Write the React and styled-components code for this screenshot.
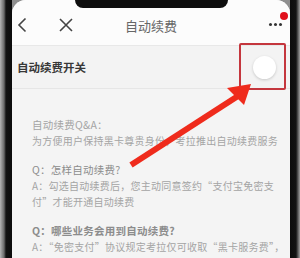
import React from 'react'
import styled, { createGlobalStyle } from 'styled-components'

const GlobalStyle = createGlobalStyle`
  body {
    margin: 0;
    background: #8f8f8f;
    font-family: "Noto Sans CJK SC", "Noto Sans", sans-serif;
  }
`

const Phone = styled.div`
  position: relative;
  display: flex;
  width: 300px;
  height: 258px;
  overflow: hidden;
  background: #8f8f8f;
`

const Bezel = styled.div`
  width: ${p => p.w}px;
  flex-shrink: 0;
  background: ${p => p.side === 'left'
    ? 'linear-gradient(to right, #b5b5b5 0, #6a6a6a 4px, #121212 6px, #0c0c0c 100%)'
    : 'linear-gradient(to right, #0c0c0c 0, #121212 6px, #5a5a5a 8px, #a0a0a0 100%)'};
`

const Screen = styled.div`
  flex: 1;
  display: flex;
  flex-direction: column;
  background: #f4f4f4;
  border-radius: 14px 14px 0 0;
  overflow: hidden;
`

const Notch = styled.div`
  position: absolute;
  left: 75px;
  top: 0;
  width: 153px;
  height: 8px;
  background: #0e0e0e;
  border-radius: 0 0 9px 9px;
`

const Header = styled.div`
  height: 46px;
  flex-shrink: 0;
  display: flex;
  align-items: center;
  padding-top: 4px;
  box-sizing: border-box;
  background: #fcfcfc;
  border-bottom: 1px solid #e8e8e8;
  position: relative;
`

const IconBtn = styled.div`
  width: ${p => p.w}px;
  margin-left: ${p => p.ml}px;
  display: flex;
  align-items: center;
`

const Title = styled.div`
  position: absolute;
  left: 0;
  right: 0;
  top: 16px;
  text-align: center;
  font-size: 13px;
  color: #666;
  pointer-events: none;
`

const More = styled.div`
  margin-left: auto;
  margin-right: 8px;
  position: relative;
  display: flex;
  gap: 2px;
`

const Dot = styled.span`
  width: 3px;
  height: 3px;
  border-radius: 50%;
  background: #333;
`

const Badge = styled.span`
  position: absolute;
  right: -6px;
  top: -11px;
  width: 8px;
  height: 8px;
  border-radius: 50%;
  background: #e0101b;
`

const SwitchRow = styled.div`
  height: 42px;
  flex-shrink: 0;
  display: flex;
  align-items: center;
  padding: 0 14px 0 5px;
  border-bottom: 1px solid #e6e6e6;
  background: #f3f3f3;
`

const Label = styled.div`
  font-size: 11.5px;
  font-weight: 700;
  color: #383838;
`

const Knob = styled.div`
  margin-left: auto;
  width: 23px;
  height: 23px;
  border-radius: 50%;
  background: #fff;
  box-shadow: 0 1px 3px rgba(0, 0, 0, 0.18);
`

const Content = styled.div`
  padding: 28px 6px 0 20px;
  display: flex;
  flex-direction: column;
  gap: 13px;
`

const Block = styled.div`
  font-size: 10px;
  line-height: 16px;
  color: #a4a4a4;
  white-space: nowrap;
  letter-spacing: 0.25px;
`

const Line = styled.div`
  color: ${p => p.dark ? '#8c8c8c' : 'inherit'};
  font-weight: ${p => p.bold ? 700 : 400};
  font-size: ${p => p.big ? '10.5px' : 'inherit'};
`

const Highlight = styled.div`
  position: absolute;
  left: 239px;
  top: 43px;
  width: 47px;
  height: 47px;
  box-sizing: border-box;
  border: 2px solid #c4363d;
  border-radius: 2px;
`

const ArrowLayer = styled.svg`
  position: absolute;
  left: 0;
  top: 0;
  pointer-events: none;
`

export default function App() {
  return (
    <>
      <GlobalStyle />
      <Phone>
        <Bezel side="left" w={12} />
        <Screen>
          <Header>
            <IconBtn w={14} ml={5}>
              <svg width="10" height="16" viewBox="0 0 10 16">
                <path d="M8.5 1.5 L2 8 L8.5 14.5" fill="none" stroke="#444" strokeWidth="1.6" />
              </svg>
            </IconBtn>
            <IconBtn w={16} ml={28}>
              <svg width="14" height="14" viewBox="0 0 14 14">
                <path d="M1 1 L13 13 M13 1 L1 13" fill="none" stroke="#444" strokeWidth="1.6" />
              </svg>
            </IconBtn>
            <Title>自动续费</Title>
            <More>
              <Dot /><Dot /><Dot />
              <Badge />
            </More>
          </Header>
          <SwitchRow>
            <Label>自动续费开关</Label>
            <Knob />
          </SwitchRow>
          <Content>
            <Block>
              <Line big>自动续费Q&amp;A：</Line>
              <Line>为方便用户保持黑卡尊贵身份，考拉推出自动续费服务</Line>
            </Block>
            <Block>
              <Line dark big>Q：怎样自动续费?</Line>
              <Line>A：勾选自动续费后，您主动同意签约“支付宝免密支</Line>
              <Line>付”才能开通自动续费</Line>
            </Block>
            <Block>
              <Line dark bold big>Q：哪些业务会用到自动续费?</Line>
              <Line>A：“免密支付”协议规定考拉仅可收取“黑卡服务费”，</Line>
            </Block>
          </Content>
        </Screen>
        <Bezel side="right" w={10} />
        <Notch />
        <Highlight />
        <ArrowLayer width="300" height="258" viewBox="0 0 300 258">
          <line x1="131" y1="165" x2="238" y2="96" stroke="#ef2b1c" strokeWidth="6" />
          <polygon points="251,84 227,88 244,105" fill="#ef2b1c" />
        </ArrowLayer>
      </Phone>
    </>
  )
}
